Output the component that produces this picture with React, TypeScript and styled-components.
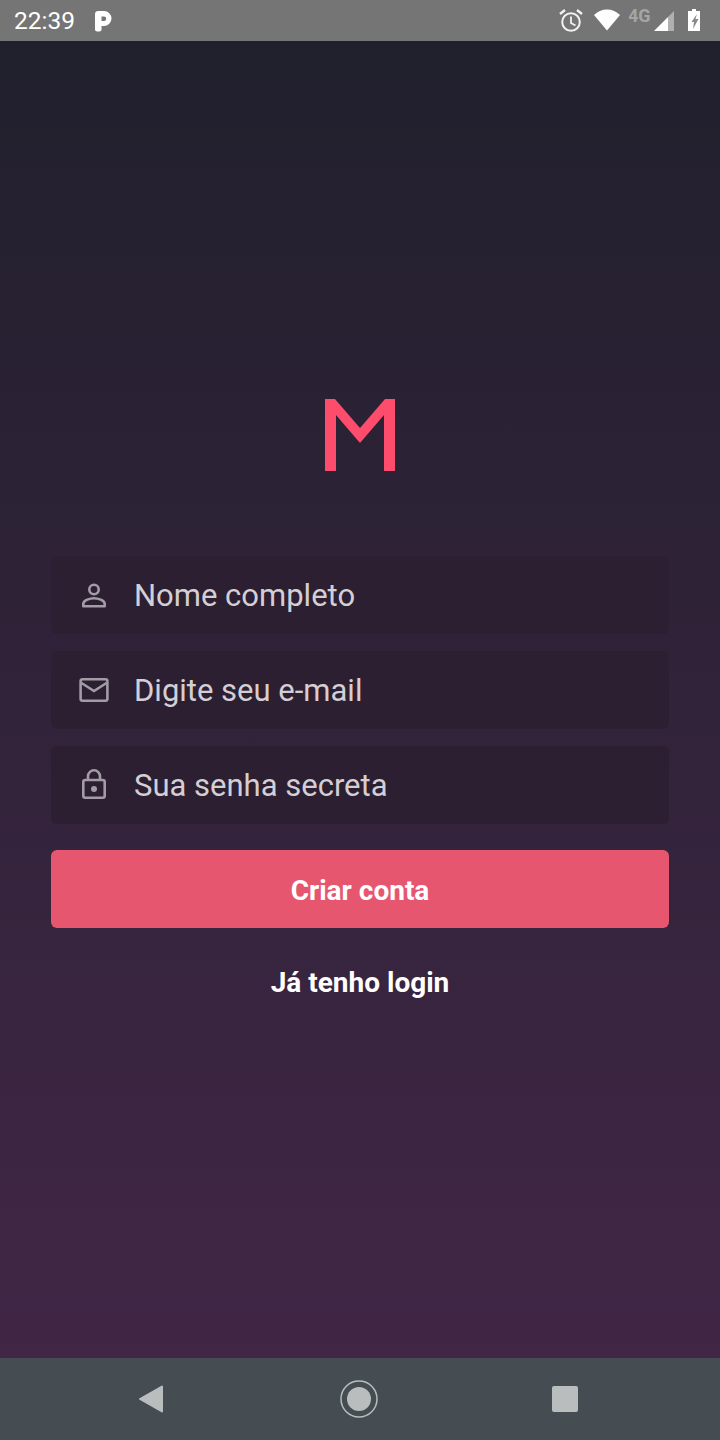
import React from "react";
import styled, { createGlobalStyle } from "styled-components";

const Global = createGlobalStyle`
  html, body { margin: 0; padding: 0; background: #464d52; }
  * { box-sizing: border-box; }
`;

const Screen = styled.div`
  width: 720px;
  height: 1440px;
  display: flex;
  flex-direction: column;
  font-family: Roboto, "Liberation Sans", sans-serif;
  overflow: hidden;
`;

const StatusBar = styled.div`
  height: 41px;
  flex: none;
  background: #757575;
  display: flex;
  align-items: center;
  padding: 0 20px 0 14px;
  color: #fff;
`;

const Clock = styled.span`
  font-size: 24.5px;
  line-height: 41px;
  width: 79px;
  font-weight: 400;
`;

const StatusIcons = styled.div`
  margin-left: auto;
  display: flex;
  align-items: center;
  height: 41px;
`;

const StatusIcon = styled.svg<{ $gap?: number }>`
  display: block;
  flex: none;
  margin-right: ${(p) => p.$gap ?? 0}px;
`;

const Main = styled.main`
  flex: 1;
  background: linear-gradient(180deg, #21202d 0%, #412646 100%);
  display: flex;
  flex-direction: column;
  align-items: center;
  padding: 357px 51px 0;
`;

const Logo = styled.svg`
  width: 74px;
  height: 74px;
  display: block;
  margin-bottom: 84px;
`;

const Form = styled.form`
  width: 618px;
  display: flex;
  flex-direction: column;
  gap: 17.5px;
`;

const Field = styled.div`
  height: 77.5px;
  background: #2c1f31;
  border-radius: 6px;
  display: flex;
  align-items: center;
  padding-left: 27px;
`;

const FieldIcon = styled.svg`
  width: 32px;
  height: 32px;
  flex: none;
  margin-right: 24px;
`;

const FieldText = styled.span`
  font-size: 31px;
  padding-top: 2px;
  color: #d4cfd5;
`;

const Submit = styled.button`
  height: 78px;
  margin-top: 8.5px;
  padding-top: 4px;
  border: 0;
  border-radius: 6px;
  background: #e7566f;
  color: #fff;
  font: 700 28px Roboto, "Liberation Sans", sans-serif;
`;

const LoginLink = styled.a`
  margin-top: 36px;
  font-size: 28px;
  font-weight: 700;
  line-height: 38px;
  color: #fff;
`;

const NavBar = styled.nav`
  height: 82px;
  flex: none;
  background: #464d52;
  display: flex;
  align-items: center;
  justify-content: space-between;
  padding: 0 142px 0 139px;
`;

const NavIcon = styled.svg`
  display: block;
`;

export default function App() {
  return (
    <Screen>
      <Global />
      <StatusBar>
        <Clock>22:39</Clock>
        <svg width="20" height="24" viewBox="0 0 20 24">
          <path
            d="M2 5C2 3.300 3.300 2 5 2h6a7.500 7.500 0 0 1 0 15H8.500v3.500c0 1.200-.9 2-2.200 2H4.200C3 22.500 2 21.700 2 20.500Z M8.500 7.500v4.500H11a2.250 2.250 0 0 0 0-4.500Z"
            fill="#fff"
            fillRule="evenodd"
          />
        </svg>
        <StatusIcons>
          <StatusIcon $gap={9} width="26" height="41" viewBox="0 0 26 41">
            <circle cx="13" cy="22" r="8.800" fill="none" stroke="#f1f1f1" strokeWidth="2" />
            <path d="M13 16.500V23l4.500 2.500" fill="none" stroke="#f1f1f1" strokeWidth="1.800" />
            <path d="M2 14 7 10M24 14 19 10" stroke="#f1f1f1" strokeWidth="2.400" />
          </StatusIcon>
          <StatusIcon $gap={8} width="28" height="41" viewBox="0 0 28 41">
            <path d="M14 30.500 1 15C4.500 11.500 9 9.500 14 9.500s9.500 2 13 5.500Z" fill="#fff" />
          </StatusIcon>
          <StatusIcon $gap={13} width="46" height="41" viewBox="0 0 46 41">
            <text x="-1" y="22" fill="#a5a5a5" fontFamily="Roboto, sans-serif" fontWeight="700" fontSize="18">
              4G
            </text>
            <path d="M25 31 39 17v14Z" fill="#fff" />
            <path d="M39 17 45 11v20H39Z" fill="#b0b0b0" />
          </StatusIcon>
          <StatusIcon width="12" height="41" viewBox="0 0 12 41">
            <path d="M4 9h4v2h4v20H0V11h4Z" fill="#fff" />
            <path d="M9 14 3.500 22H6l-1 7 5.500-10H7.500Z" fill="#8a8a8a" />
          </StatusIcon>
        </StatusIcons>
      </StatusBar>

      <Main>
        <Logo viewBox="0 0 74 74">
          <path d="M2 73V1H12L37 30 62 1H72V73H61V17L37 45 13 17V73Z" fill="#fd4c6c" />
        </Logo>
        <Form>
          <Field>
            <FieldIcon viewBox="0 0 32 32">
              <circle cx="16" cy="10.500" r="4.700" fill="none" stroke="#a19ca6" strokeWidth="2.600" />
              <path d="M5.300 27.200v-2.500c0-3.500 7-5.500 10.700-5.500s10.700 2 10.700 5.500v2.500Z" fill="none" stroke="#a19ca6" strokeWidth="2.600" strokeLinejoin="round" />
            </FieldIcon>
            <FieldText>Nome completo</FieldText>
          </Field>
          <Field>
            <FieldIcon viewBox="0 0 32 32">
              <rect x="2.600" y="5.300" width="26.800" height="21.400" rx="2" fill="none" stroke="#a19ca6" strokeWidth="2.600" />
              <path d="M3.500 9 16 17l12.500-8" fill="none" stroke="#a19ca6" strokeWidth="2.600" />
            </FieldIcon>
            <FieldText>Digite seu e-mail</FieldText>
          </Field>
          <Field>
            <FieldIcon viewBox="0 0 32 32">
              <rect x="5.300" y="11" width="21.400" height="17.700" rx="2" fill="none" stroke="#a19ca6" strokeWidth="2.600" />
              <path d="M10 11V7.300a6 6 0 0 1 12 0V11" fill="none" stroke="#a19ca6" strokeWidth="2.600" />
              <circle cx="16" cy="20" r="3" fill="#a19ca6" />
            </FieldIcon>
            <FieldText>Sua senha secreta</FieldText>
          </Field>
          <Submit type="button">Criar conta</Submit>
        </Form>
        <LoginLink>Já tenho login</LoginLink>
      </Main>

      <NavBar>
        <NavIcon width="26" height="30" viewBox="0 0 26 30">
          <path d="M23 2.500v25L1 15Z" fill="#b9bdbe" stroke="#b9bdbe" strokeWidth="2" strokeLinejoin="round" />
        </NavIcon>
        <NavIcon width="38" height="38" viewBox="0 0 38 38">
          <circle cx="19" cy="19" r="18" fill="none" stroke="#b9bdbe" strokeWidth="1.500" />
          <circle cx="19" cy="19" r="12" fill="#b9bdbe" />
        </NavIcon>
        <NavIcon width="26" height="26" viewBox="0 0 26 26">
          <rect width="26" height="26" rx="2" fill="#b9bdbe" />
        </NavIcon>
      </NavBar>
    </Screen>
  );
}
